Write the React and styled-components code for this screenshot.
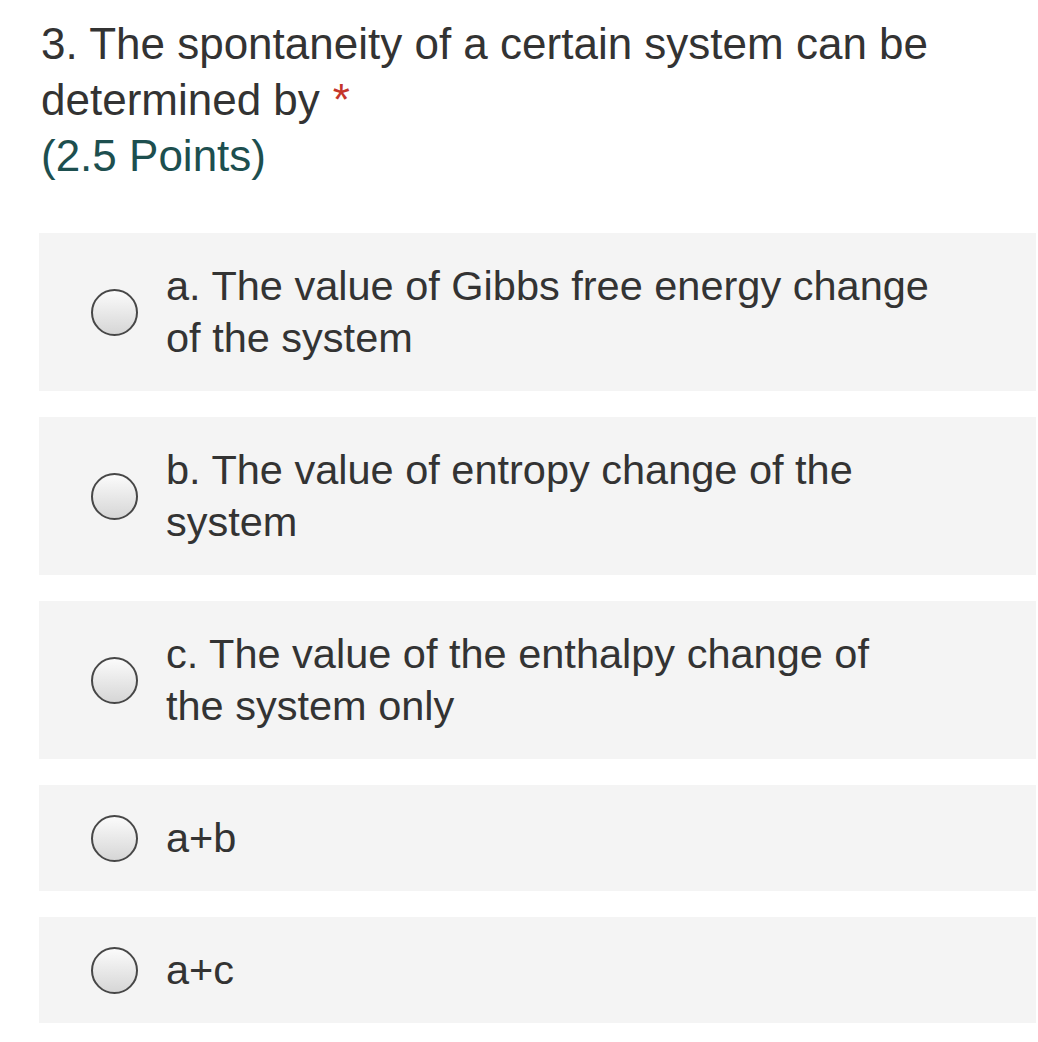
import React from 'react';
import styled, { createGlobalStyle } from 'styled-components';

const GlobalStyle = createGlobalStyle`
  html, body {
    margin: 0;
    padding: 0;
    background: #ffffff;
  }
  body {
    font-family: "Liberation Sans", Arial, Helvetica, sans-serif;
    color: #333333;
  }
`;

const Page = styled.div`
  width: 1038px;
  padding: 16px 2px 20px 39px;
  box-sizing: border-box;
`;

const Question = styled.div`
  padding-left: 2px;
  font-size: 44px;
  line-height: 56px;
  color: #333333;
  margin-bottom: 49px;
`;

const Required = styled.span`
  display: inline-block;
  margin-left: 13px;
  color: #c5352a;
`;

const Points = styled.div`
  color: #1d4f4f;
`;

const Options = styled.div`
  display: flex;
  flex-direction: column;
  gap: 26px;
`;

const Option = styled.label`
  display: flex;
  align-items: center;
  background: #f4f4f4;
  padding: 27px 0 27px 52px;
  cursor: pointer;
`;

const Radio = styled.span`
  flex: 0 0 auto;
  width: 47px;
  height: 47px;
  box-sizing: border-box;
  border-radius: 50%;
  border: 2.5px solid #474747;
  background: linear-gradient(to bottom, #fbfbfb, #d6d6d6);
  margin-right: 28px;
`;

const OptionText = styled.span`
  max-width: 768px;
  font-size: 41.5px;
  line-height: 52px;
  color: #333333;
`;

const options = [
  'a. The value of Gibbs free energy change of the system',
  'b. The value of entropy change of the system',
  'c. The value of the enthalpy change of the system only',
  'a+b',
  'a+c',
];

const App = () => (
  <>
    <GlobalStyle />
    <Page>
      <Question>
        3. The spontaneity of a certain system can be determined by<Required>*</Required>
        <Points>(2.5 Points)</Points>
      </Question>
      <Options>
        {options.map((text) => (
          <Option key={text}>
            <Radio />
            <OptionText>{text}</OptionText>
          </Option>
        ))}
      </Options>
    </Page>
  </>
);

export default App;
